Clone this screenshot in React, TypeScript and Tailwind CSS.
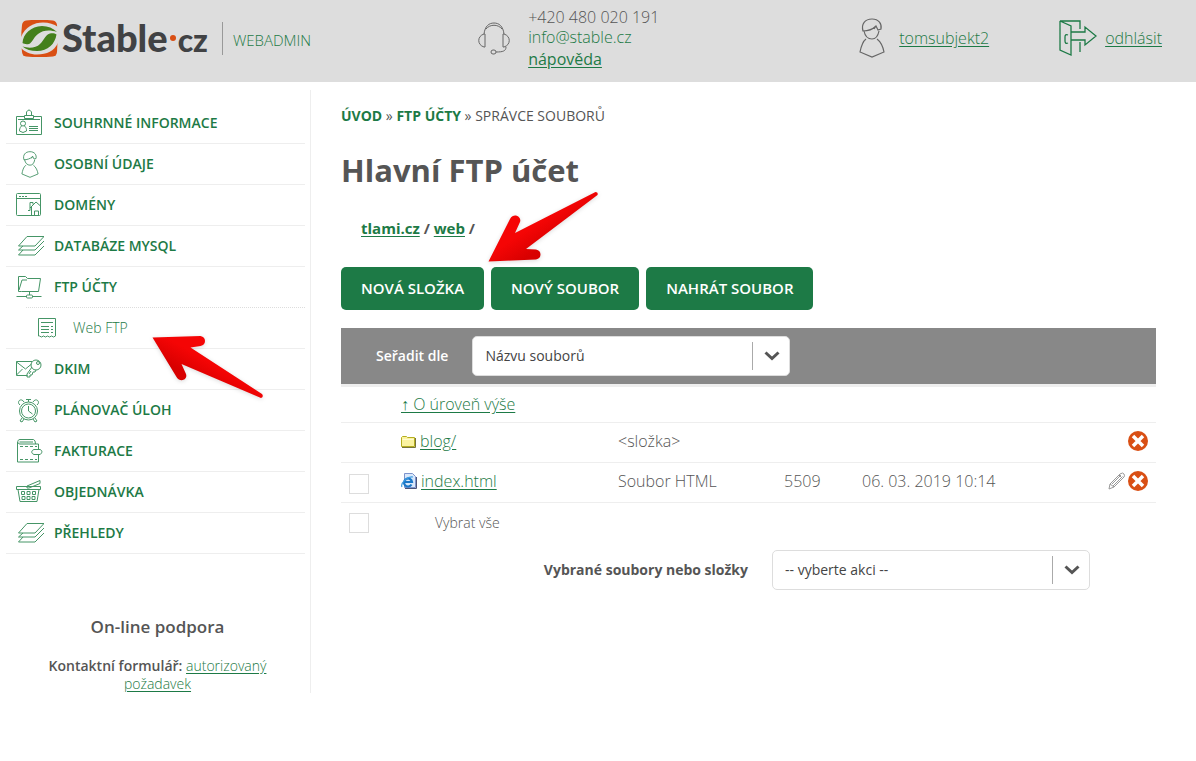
import type { ReactNode } from 'react';

interface IconProps {
  className?: string;
}

interface MenuItem {
  label: string;
  icon: ReactNode;
  children?: { label: string; icon: ReactNode }[];
}

function Logo() {
  return (
    <svg viewBox="0 0 37 37" className="size-[37px]" aria-hidden="true">
      <path d="M5 .5Q18-1 32 .5Q35.500 1 36 5Q37 18 36 32Q35.500 36 32 36.500Q18 37.500 5 36.500Q1.500 36 1 32Q-.5 18 1 5Q1.500 1 5 .5Z" fill="#d94f14" />
      <path d="M0 17C4 7 13 2.500 22 2.500C28 2.500 33 4 37 7V23C33 31 26 34.500 16 34.500C9 34.500 4 32 0 28Z" fill="#ddd" />
      <path d="M1.500 23C2 14 10 6.500 21 6C27 6 32 8 36 12C29 9.500 22 10 17 14C12 18 11 23 8 24C5 24.500 3 24 1.500 23Z" fill="#44801c" />
      <path d="M1.500 26.500C8 28.500 15 28 19 24C24 19 25 14 29 13.500C32 13 34 13.500 35.500 14.500C34 24 27 31 16 31C10 31 5 29.500 1.500 26.500Z" fill="#44801c" />
    </svg>
  );
}

function HeadsetIcon() {
  return (
    <svg viewBox="0 0 32 33" className="h-[33px] w-8 fill-none stroke-[#666]" aria-hidden="true">
      <path d="M6 12C7 4 11 1 16 1s9 3 10 11M8 7c4-5 12-5 16 0M7 12h-1c-7 2-7 11 0 13h1zM25 12h1c7 2 7 11 0 13h-1zM28 25c0 4-3 5-10 5" />
      <rect x="13" y="28" width="5" height="4" rx="2" />
    </svg>
  );
}

function PersonIcon({ className }: IconProps) {
  return (
    <svg viewBox="0 0 26 40" className={className} fill="none" strokeWidth="1.200" aria-hidden="true">
      <path d="M4 13C2 6 6 1 13 1s10 5 9 10l-3 1-2-4C13 12 8 13 4 13ZM5 13c1 5 4 8 8 8s6-3 7-8M17 8l-2 3M7 21c-4 3-5 8-6 13l12 5 12-5c-1-5-3-10-7-13" />
    </svg>
  );
}

function LogoutIcon() {
  return (
    <svg viewBox="0 0 38 38" className="size-[38px] fill-none stroke-[#1d7a46]" strokeWidth="1.300" aria-hidden="true">
      <path d="M1 2v29l11 5V7L1 2h20v8M21 23v10M12 13h14V8l11 9-11 9v-5H12M9 16c-2-1-3 0-3 2v4c0 2 1 3 3 2" />
    </svg>
  );
}

function MenuIcon({ children }: { children: ReactNode }) {
  return (
    <svg viewBox="0 0 28 28" className="size-7 fill-none stroke-[#459566]" aria-hidden="true">
      {children}
    </svg>
  );
}

const layers = (
  <MenuIcon>
    <path d="M11 4.500h17L19 14H2.500zM7 14l-4.500 4H19l9-9M7 18l-4.500 5H19l9-9" />
  </MenuIcon>
);

const menu: MenuItem[] = [
  {
    label: 'SOUHRNNÉ INFORMACE',
    icon: (
      <MenuIcon>
        <path d="M9 7.500H.5v18h25v-18H17M2 10.500h22M8.500 6.500h9v3h-9zM10.500 6V3q2.500-4 5 0v3M13 17.500h9M13 19.500h9M13 21.500h9" />
        <circle cx="7" cy="14.500" r="2.500" />
        <path d="M5.500 17c-2 2-2 4-2 5l3.500 1.500 3.500-1.500c0-2 0-3-2-5" />
      </MenuIcon>
    ),
  },
  { label: 'OSOBNÍ ÚDAJE', icon: <PersonIcon className="h-[27px] w-7 stroke-[#348a58]" /> },
  {
    label: 'DOMÉNY',
    icon: (
      <MenuIcon>
        <rect x=".5" y="2.500" width="24" height="22" rx="1" />
        <path d="M.5 7.500h24M3 5.500h2M6 5.500h2M9 5.500h2M12 19.500h2v-8h3v2M14 17l6-6 4.500 4M15.500 16v8.500M18.500 24v-4h4v4" />
      </MenuIcon>
    ),
  },
  { label: 'DATABÁZE MYSQL', icon: layers },
  {
    label: 'FTP ÚČTY',
    icon: (
      <MenuIcon>
        <path d="M5.500 18.500h-3v-15h7l2 2h13l-2 13h-17zM3 17l3-10h5M13.500 19v3M.5 23.500h10M16.500 23.500h9" />
        <rect x="10.500" y="22" width="6" height="3" rx="1" />
      </MenuIcon>
    ),
    children: [
      {
        label: 'Web FTP',
        icon: (
          <svg viewBox="0 0 18 20" className="h-5 w-[18px] fill-none stroke-[#459566]" aria-hidden="true">
            <path d="M.5 18V.5h17V18l-2 1-2-1-2 1-2-1-2 1-2-1-2 1-2-1zM3 4.500h12M3 8.500h8M3 11.500h8M3 14.500h8M13 8.500h2M13 11.500h2M13 14.500h2" />
          </svg>
        ),
      },
    ],
  },
  {
    label: 'DKIM',
    icon: (
      <MenuIcon>
        <path d="M16 6.500H.5v14h11M.5 7l9 7 6-5M.5 20l6-6M16 12l-5 7v3h3v-2h2l1-3h2l1-2M15 16l-2 3" />
        <circle cx="20" cy="10" r="5" />
        <circle cx="22" cy="8" r="1.500" />
      </MenuIcon>
    ),
  },
  {
    label: 'PLÁNOVAČ ÚLOH',
    icon: (
      <MenuIcon>
        <circle cx="12.500" cy="15" r="9" />
        <circle cx="12.500" cy="15" r="7" />
        <path d="M12.500 10v5l4 3M10 3.500h5M12.500 3.500V6M4 9C0 6 5 1 8 6M21 9c4-3-1-8-4-3M6 22l-2 3 2 1 2-3M19 22l2 3-2 1-2-3" />
      </MenuIcon>
    ),
  },
  {
    label: 'FAKTURACE',
    icon: (
      <MenuIcon>
        <path d="M22.500 12V7H4C1 7 1 2.500 4 2.500h13.500Q19.500 3 19.500 7M1.500 5v20h21v-7M3.500 5H17M18 12.500h6c3 1 2 4 0 5h-6c-3-1-3-4 0-5Z" />
        <path d="M4 9.500h17M4 22.500h17" strokeDasharray="3 2" />
      </MenuIcon>
    ),
  },
  {
    label: 'OBJEDNÁVKA',
    icon: (
      <MenuIcon>
        <path d="M.5 8.500h24v3H.5zM2 11.500l2 12h17l2-12M11 8l13-5.500v3L13 10q-3 1-2-2" />
        <path d="M5.500 13.500h3v3h-3zM11 13.500h3v3h-3zM16.500 13.500h3v3h-3zM6 18.500h3v3H6zM11 18.500h3v3h-3zM16 18.500h3v3h-3z" />
      </MenuIcon>
    ),
  },
  { label: 'PŘEHLEDY', icon: layers },
];

function SelectBox({ id, option }: { id: string; option: string }) {
  return (
    <div className="relative">
      <select id={id} className="h-10 w-[318px] appearance-none rounded-[5px] border border-[#ddd] bg-white px-3 text-sm text-[#444]">
        <option>{option}</option>
      </select>
      <div className="pointer-events-none absolute inset-y-1.5 right-0 flex w-[38px] items-center justify-center border-l border-[#aaa]">
        <svg viewBox="0 0 16 10" className="h-2.5 w-4 fill-none stroke-[#555]" strokeWidth="3" aria-hidden="true">
          <path d="M1.500 1.500 8 7.500l6.500-6" />
        </svg>
      </div>
    </div>
  );
}

function DeleteButton({ name }: { name: string }) {
  return (
    <button type="button" aria-label={`Smazat ${name}`} className="block">
      <svg viewBox="0 0 20 20" className="size-5">
        <circle cx="10" cy="10" r="10" fill="#d94f14" />
        <path d="m5 5 10 10m0-10L5 15" stroke="#fff" strokeWidth="3.500" />
      </svg>
    </button>
  );
}

function FolderIcon() {
  return (
    <svg viewBox="0 0 15 13" className="h-[13px] w-[15px]" aria-hidden="true">
      <path d="M.5 11.500v-9l1-1h4l1 1h7v9z" fill="#fbf3a0" stroke="#b5ae20" />
      <path d="M1.500 4.500h11" stroke="#fffbd0" />
      <path d="M1 12.500h13.500V3" fill="none" stroke="#77733c" />
    </svg>
  );
}

function HtmlIcon() {
  return (
    <svg viewBox="0 0 16 16" className="size-4" aria-hidden="true">
      <path d="M3.500.5h8l3 3v11h-11z" fill="#d9e8fb" stroke="#7d93cc" />
      <path d="M4 15.500h11.500V4" fill="none" stroke="#4b5378" />
      <path d="M10.500 11.500A4 4 0 1 1 11 9H4" fill="none" stroke="#1b78c8" strokeWidth="2.200" />
      <path d="M1 14C-1 10 7 3 12 4" fill="none" stroke="#3d9be0" strokeWidth="1.200" />
    </svg>
  );
}

function PencilIcon() {
  return (
    <svg viewBox="0 0 18 18" className="size-[18px] fill-none stroke-[#999]" aria-hidden="true">
      <path d="m1 17 1-5L12 2q3-2 4 0t0 3L6 15zM2 12l4 3M4 12l9-9M5 14l9.500-9.500M11 3l4 4" />
    </svg>
  );
}

const checkbox = 'block size-5 appearance-none border border-[#ddd] bg-white checked:bg-[#1d7a46]';
const link = 'text-[#1d7a46] underline underline-offset-2';
const button = 'h-[43px] rounded-[5px] bg-[#1d7a46] px-5';

export default function App() {
  return (
    <div className="relative bg-white font-['Open_Sans','Noto_Sans',sans-serif] text-[#555]">
      {/* Header */}
      <header className="flex h-[82px] items-center bg-[#ddd] pr-[34px] pb-1.5 pl-[21px]">
        <a href="#" className="flex items-center gap-1">
          <Logo />
          <span className="flex items-baseline font-['Lato',sans-serif] leading-10 font-black text-[#414244]">
            <span className="text-[38px]">Stable</span>
            <span className="mx-0.5 size-1.5 self-center rounded-full bg-[#d94f14]" />
            <span className="text-[32px]">cz</span>
          </span>
        </a>
        <span className="ml-3.5 flex h-[33px] items-center border-l border-[#999] pt-1 pl-2.5 text-[15px] font-light text-[#1d7a46]">
          WEBADMIN
        </span>
        <div className="ml-[167px] flex items-center gap-[18px]">
          <HeadsetIcon />
          <div className="flex flex-col text-base leading-5 font-light">
            <span>+420 480 020 191</span>
            <a href="#" className="text-[#1d7a46]">info@stable.cz</a>
            <a href="#" className={`mt-0.5 font-normal ${link}`}>nápověda</a>
          </div>
        </div>
        <div className="ml-auto flex items-center gap-[70px] text-base font-light">
          <a href="#" className={`flex items-center gap-3.5 ${link}`}>
            <PersonIcon className="h-10 w-[26px] stroke-[#666]" />
            tomsubjekt2
          </a>
          <a href="#" className={`flex items-center gap-2 ${link}`}>
            <LogoutIcon />
            odhlásit
          </a>
        </div>
      </header>

      <div className="flex pt-2">
        {/* Sidebar */}
        <aside className="w-[311px] shrink-0 border-r border-[#eee] pt-[13px] pr-[5px] pl-1.5">
          <nav>
            <ul>
              {menu.map((item) => (
                <li key={item.label}>
                  <a href="#" className={`flex items-center gap-2.5 border-[#eee] pl-2.5 text-sm font-semibold text-[#1d7a46] ${item.children ? 'h-10' : 'h-[41px] border-b'}`}>
                    {item.icon}
                    {item.label}
                  </a>
                  {item.children?.map((child) => (
                    <a key={child.label} href="#" className="flex h-[42px] items-center border-b border-[#eee] pl-5 text-sm font-light text-[#1d7a46]">
                      <span className="flex h-full flex-1 items-center gap-[17px] border-t border-dotted border-[#ddd] pl-3">
                        {child.icon}
                        {child.label}
                      </span>
                    </a>
                  ))}
                </li>
              ))}
            </ul>
          </nav>
          <section className="pt-[59px] pr-7 pl-8 text-center">
            <h2 className="text-[17px] leading-7 font-semibold">On-line podpora</h2>
            <p className="mt-4 text-sm leading-[18px]">
              <strong className="font-semibold">Kontaktní formulář:</strong>{' '}
              <a href="#" className={`font-light ${link}`}>
                <span>autorizovaný</span> <span>požadavek</span>
              </a>
            </p>
          </section>
        </aside>

        {/* File manager */}
        <main className="min-w-0 flex-1 pt-4 pr-10 pl-[30px]">
          <nav className="text-sm leading-5">
            <a href="#" className="font-bold text-[#1d7a46]">ÚVOD</a> »{' '}
            <a href="#" className="font-bold text-[#1d7a46]">FTP ÚČTY</a> » SPRÁVCE SOUBORŮ
          </nav>
          <h1 className="mt-6 text-[31px] leading-10 font-bold">Hlavní FTP účet</h1>
          <p className="mt-[26px] pl-5 text-[15px] leading-6 font-bold">
            <a href="#" className={link}>tlami.cz</a> / <a href="#" className={link}>web</a> /
          </p>
          <div className="mt-[27px] flex gap-[7px] text-[15px] font-semibold text-white">
            <button type="button" className={button}>NOVÁ SLOŽKA</button>
            <button type="button" className={button}>NOVÝ SOUBOR</button>
            <button type="button" className={button}>NAHRÁT SOUBOR</button>
          </div>
          <div className="mt-[18px] flex h-[59px] items-center gap-6 border-b-[3px] border-[#eee] bg-[#888] pl-[35px]">
            <label htmlFor="sort" className="text-sm font-semibold text-white">Seřadit dle</label>
            <SelectBox id="sort" option="Názvu souborů" />
          </div>
          <table className="w-full table-fixed text-base leading-6 font-light">
            <colgroup>
              <col className="w-[60px]" />
              <col className="w-[217px]" />
              <col className="w-[166px]" />
              <col className="w-[78px]" />
              <col />
              <col className="w-[60px]" />
            </colgroup>
            <tbody>
              <tr className="h-[35px] border-b border-[#eee]">
                <td />
                <td colSpan={5}><a href="#" className={link}>↑ O úroveň výše</a></td>
              </tr>
              <tr className="h-10 border-b border-[#eee]">
                <td />
                <td className="pb-0.5">
                  <span className="flex items-center gap-1"><FolderIcon /><a href="#" className={link}>blog/</a></span>
                </td>
                <td className="pb-0.5">&lt;složka&gt;</td>
                <td />
                <td />
                <td className="pb-0.5"><div className="flex justify-end pr-2"><DeleteButton name="blog" /></div></td>
              </tr>
              <tr className="h-10 border-b border-[#eee]">
                <td className="pt-1 pl-2"><input type="checkbox" aria-label="index.html" className={checkbox} /></td>
                <td className="pb-0.5">
                  <span className="flex items-center gap-1"><HtmlIcon /><a href="#" className={link}>index.html</a></span>
                </td>
                <td className="pb-0.5">Soubor HTML</td>
                <td className="pb-0.5">5509</td>
                <td className="pb-0.5">06. 03. 2019 10:14</td>
                <td className="pb-0.5">
                  <div className="flex items-center justify-end gap-0.5 pr-2">
                    <button type="button" aria-label="Upravit index.html"><PencilIcon /></button>
                    <DeleteButton name="index.html" />
                  </div>
                </td>
              </tr>
            </tbody>
          </table>
          <label className="flex h-10 items-center gap-[66px] pl-2 text-sm font-light">
            <input type="checkbox" className={checkbox} />
            Vybrat vše
          </label>
          <div className="mt-[7px] flex items-center justify-end gap-6 pr-[66px]">
            <label htmlFor="action" className="text-sm font-bold">Vybrané soubory nebo složky</label>
            <SelectBox id="action" option="-- vyberte akci --" />
          </div>
        </main>
      </div>

      {/* Pointers laid over the page */}
      <svg viewBox="0 0 112 72" className="pointer-events-none absolute top-[191px] left-[487px] h-[72px] w-28 drop-shadow-sm" aria-hidden="true">
        <linearGradient id="arrow-red" x1="0" y1="0" x2="1" y2="1">
          <stop offset=".45" stopColor="#f50505" />
          <stop offset=".65" stopColor="#d80000" />
        </linearGradient>
        <path d="M1.500 70.500 23 28c4-7 12-2 10 3l-5 11L108.500 1q3 0 2 3L39 58l10 .5c6 1 6 9 0 10z" fill="url(#arrow-red)" />
      </svg>
      <svg viewBox="0 0 112 64" className="pointer-events-none absolute top-[335px] left-[151px] h-16 w-28 drop-shadow-sm" aria-hidden="true">
        <linearGradient id="arrow-red-left" x1="1" y1="0" x2="0" y2="1">
          <stop offset=".45" stopColor="#f50505" />
          <stop offset=".65" stopColor="#d80000" />
        </linearGradient>
        <path d="M1.500 2.500 49.500 1c6 1 6 9 0 10l-10 1.500L111 59q2 3-1 4L30.500 29l4.500 10c2 6-6 9-9.500 3z" fill="url(#arrow-red-left)" />
      </svg>
    </div>
  );
}
